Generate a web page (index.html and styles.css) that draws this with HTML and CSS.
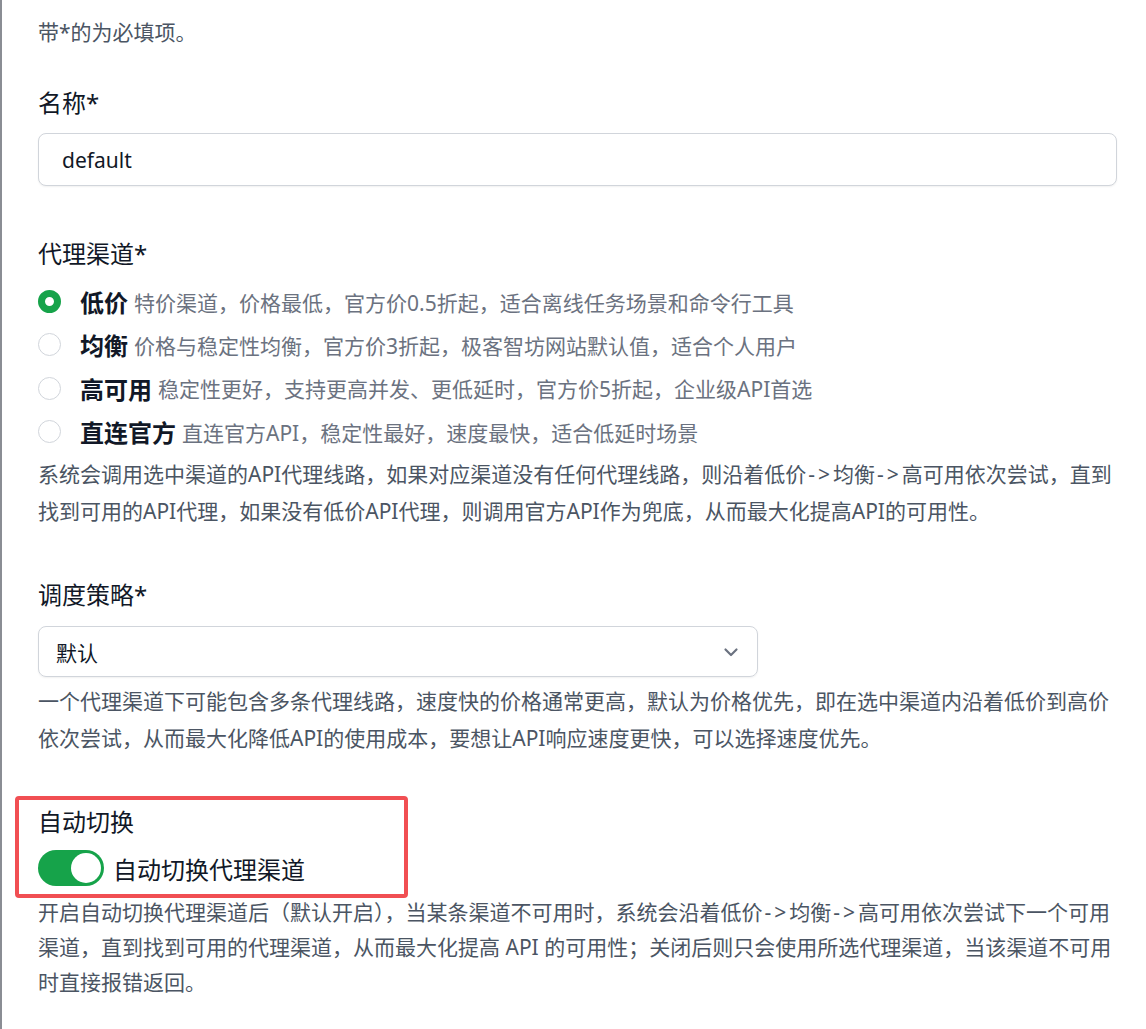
FILE: index.html
```html
<!DOCTYPE html>
<html lang="zh-CN">
<head>
    <meta charset="UTF-8">
    <meta name="viewport" content="width=device-width, initial-scale=1.0">
    <title>代理设置</title>
    <link rel="stylesheet" href="styles.css">
</head>
<body>
    <div class="form">
        <p class="intro">带*的为必填项。</p>

        <div class="field">
            <label class="field-label">名称*</label>
            <input type="text" class="text-input" value="default">
        </div>

        <div class="field field-channel">
            <label class="field-label">代理渠道*</label>
            <div class="radio-list">
                <div class="radio-row">
                    <span class="radio checked"></span>
                    <span class="radio-title">低价</span>
                    <span class="radio-desc">特价渠道，价格最低，官方价0.5折起，适合离线任务场景和命令行工具</span>
                </div>
                <div class="radio-row">
                    <span class="radio"></span>
                    <span class="radio-title">均衡</span>
                    <span class="radio-desc">价格与稳定性均衡，官方价3折起，极客智坊网站默认值，适合个人用户</span>
                </div>
                <div class="radio-row">
                    <span class="radio"></span>
                    <span class="radio-title">高可用</span>
                    <span class="radio-desc">稳定性更好，支持更高并发、更低延时，官方价5折起，企业级API首选</span>
                </div>
                <div class="radio-row">
                    <span class="radio"></span>
                    <span class="radio-title">直连官方</span>
                    <span class="radio-desc">直连官方API，稳定性最好，速度最快，适合低延时场景</span>
                </div>
            </div>
            <p class="help help-channel">系统会调用选中渠道的API代理线路，如果对应渠道没有任何代理线路，则沿着低价<span class="arrow">-&gt;</span>均衡<span class="arrow">-&gt;</span>高可用依次尝试，直到找到可用的API代理，如果没有低价API代理，则调用官方API作为兜底，从而最大化提高API的可用性。</p>
        </div>

        <div class="field field-strategy">
            <label class="field-label">调度策略*</label>
            <div class="select">
                <span>默认</span>
                <svg class="chevron" width="16" height="16" viewBox="0 0 16 16"><path d="M2.5 5.5 L8 11 L13.5 5.5" fill="none" stroke="#6b7280" stroke-width="2.2" stroke-linecap="round" stroke-linejoin="round"/></svg>
            </div>
            <p class="help help-strategy">一个代理渠道下可能包含多条代理线路，速度快的价格通常更高，默认为价格优先，即在选中渠道内沿着低价到高价依次尝试，从而最大化降低API的使用成本，要想让API响应速度更快，可以选择速度优先。</p>
        </div>

        <div class="field field-switch">
            <label class="field-label">自动切换</label>
            <div class="switch-row">
                <span class="switch"><span class="knob"></span></span>
                <span class="switch-text">自动切换代理渠道</span>
            </div>
            <p class="help help-switch">开启自动切换代理渠道后（默认开启），当某条渠道不可用时，系统会沿着低价<span class="arrow">-&gt;</span>均衡<span class="arrow">-&gt;</span>高可用依次尝试下一个可用渠道，直到找到可用的代理渠道，从而最大化提高 API 的可用性；关闭后则只会使用所选代理渠道，当该渠道不可用时直接报错返回。</p>
        </div>
    </div>

    <div class="highlight"></div>
</body>
</html>
```

FILE: styles.css
```css
body {
    margin: 0;
    background: #fff;
    border-left: 2px solid #8a8d94;
    font-family: "Noto Sans", "Noto Sans CJK SC", sans-serif;
    color: #111827;
    position: relative;
    min-height: 1029px;
    box-sizing: border-box;
}
.form {
    padding: 14px 29px 0 36px;
}
.intro {
    margin: 0;
    font-size: 21px;
    line-height: 36px;
    color: #4b5563;
}
.field {
    display: flex;
    flex-direction: column;
    margin-top: 35px;
}
.field-label {
    font-size: 24px;
    line-height: 36px;
    color: #111827;
}
.text-input {
    margin-top: 12px;
    height: 53px;
    box-sizing: border-box;
    border: 1px solid #d1d5db;
    border-radius: 8px;
    padding: 0 23px;
    font-family: "Noto Sans", "Noto Sans CJK SC", sans-serif;
    font-size: 21px;
    color: #111827;
    box-shadow: 0 1px 2px rgba(0, 0, 0, 0.06);
}
.field-channel {
    margin-top: 50px;
}
.radio-list {
    display: flex;
    flex-direction: column;
    margin-top: 8px;
}
.radio-row {
    display: flex;
    align-items: center;
    height: 43.3px;
}
.radio {
    width: 23px;
    height: 23px;
    box-sizing: border-box;
    border: 1px solid #d1d5db;
    border-radius: 50%;
    margin-right: 19px;
    flex-shrink: 0;
}
.radio.checked {
    border: 7px solid #16a34a;
}
.radio-title {
    font-size: 24px;
    font-weight: bold;
    color: #111827;
    margin-right: 6px;
}
.radio-desc {
    font-size: 21px;
    color: #6b7280;
}
.help {
    margin: 0;
    font-size: 21px;
    color: #4b5563;
}
.arrow {
    letter-spacing: 3px;
    margin-left: 2px;
}
.help-channel {
    margin-top: 3px;
    line-height: 37px;
}
.field-strategy {
    margin-top: 47px;
}
.select {
    margin-top: 13px;
    width: 720px;
    height: 51px;
    box-sizing: border-box;
    border: 1px solid #d1d5db;
    border-radius: 8px;
    padding: 0 18px 0 17px;
    display: flex;
    align-items: center;
    justify-content: space-between;
    font-size: 21px;
    color: #111827;
    box-shadow: 0 1px 2px rgba(0, 0, 0, 0.06);
}
.help-strategy {
    margin-top: 6px;
    line-height: 37px;
}
.field-switch {
    margin-top: 47px;
}
.switch-row {
    display: flex;
    align-items: center;
    margin-top: 10px;
    height: 36px;
}
.switch {
    width: 66px;
    height: 36px;
    border-radius: 18px;
    background: #16a34a;
    display: flex;
    align-items: center;
    justify-content: flex-end;
    padding: 0 3px;
    box-sizing: border-box;
    margin-right: 9px;
}
.knob {
    width: 30px;
    height: 30px;
    border-radius: 50%;
    background: #fff;
}
.switch-text {
    font-size: 24px;
    color: #111827;
}
.help-switch {
    margin-top: 9px;
    line-height: 35px;
}
.highlight {
    position: absolute;
    left: 13px;
    top: 796px;
    width: 393px;
    height: 102px;
    box-sizing: border-box;
    border: 4px solid #f14f53;
    border-radius: 4px;
}
```
